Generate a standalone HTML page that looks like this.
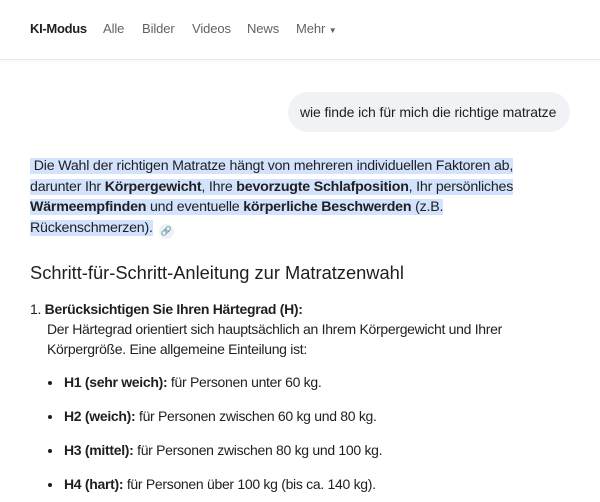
<!DOCTYPE html>
<html><head><meta charset="utf-8"><style>
*{margin:0;padding:0;box-sizing:border-box}
body{width:600px;height:502px;overflow:hidden;background:#fff;font-family:"Liberation Sans",Arial,sans-serif;color:#1f1f1f;position:relative}
.nav{position:absolute;top:0;left:0;width:600px;height:60px;border-bottom:1px solid #e6e8ec;box-shadow:0 1px 2px rgba(0,0,0,.04)}
.nav span{position:absolute;top:21px;font-size:13px;color:#5f6368;letter-spacing:-.1px}
.nav .a{color:#1f1f1f;font-weight:bold;letter-spacing:-.3px}
.bubble{position:absolute;left:288px;top:92px;width:282px;height:40px;border-radius:20px;background:#f0f2f5;font-size:14px;line-height:40px;padding-left:12px;letter-spacing:-.1px;white-space:nowrap}
.p{position:absolute;left:30px;top:156px;font-size:14.2px;line-height:20.5px;letter-spacing:-.2px;white-space:nowrap}
.hl{background:#d3e3fd}
b{font-weight:bold}
.lnk{display:inline-block;width:15px;height:15px;border-radius:50%;background:#eef0f3;vertical-align:-2px;margin-left:6px;font-size:9px;text-align:center;line-height:15px;color:#444}
h2{position:absolute;left:30px;top:262px;font-size:18.3px;font-weight:normal;letter-spacing:0;white-space:nowrap}
.t{position:absolute;font-size:14px;letter-spacing:-.3px;white-space:nowrap}
.dot{position:absolute;left:48px;width:4px;height:4px;border-radius:50%;background:#1f1f1f}
</style></head><body>
<div class="nav">
<span class="a" style="left:30px">KI-Modus</span>
<span style="left:103px">Alle</span>
<span style="left:142px">Bilder</span>
<span style="left:192px">Videos</span>
<span style="left:247px">News</span>
<span style="left:296px">Mehr <span style="position:static;font-size:8px">▼</span></span>
</div>
<div class="bubble">wie finde ich für mich die richtige matratze</div>
<div class="p"><span class="hl">&nbsp;Die Wahl der richtigen Matratze hängt von mehreren individuellen Faktoren ab,</span><br><span class="hl">darunter Ihr <b>Körpergewicht</b>, Ihre <b>bevorzugte Schlafposition</b>, Ihr persönliches</span><br><span class="hl"><b>Wärmeempfinden</b> und eventuelle <b>körperliche Beschwerden</b> (z.B.</span><br><span class="hl">Rückenschmerzen).</span><span class="lnk">🔗</span></div>
<h2>Schritt-für-Schritt-Anleitung zur Matratzenwahl</h2>
<div class="t" style="left:30px;top:301px">1. <b>Berücksichtigen Sie Ihren Härtegrad (H):</b></div>
<div class="t" style="left:47px;top:321px">Der Härtegrad orientiert sich hauptsächlich an Ihrem Körpergewicht und Ihrer</div>
<div class="t" style="left:47px;top:341px">Körpergröße. Eine allgemeine Einteilung ist:</div>
<div class="dot" style="top:381px"></div><div class="t" style="left:64px;top:374px"><b>H1 (sehr weich):</b> für Personen unter 60 kg.</div>
<div class="dot" style="top:415px"></div><div class="t" style="left:64px;top:408px"><b>H2 (weich):</b> für Personen zwischen 60 kg und 80 kg.</div>
<div class="dot" style="top:449px"></div><div class="t" style="left:64px;top:442px"><b>H3 (mittel):</b> für Personen zwischen 80 kg und 100 kg.</div>
<div class="dot" style="top:483px"></div><div class="t" style="left:64px;top:476px"><b>H4 (hart):</b> für Personen über 100 kg (bis ca. 140 kg).</div>
</body></html>
